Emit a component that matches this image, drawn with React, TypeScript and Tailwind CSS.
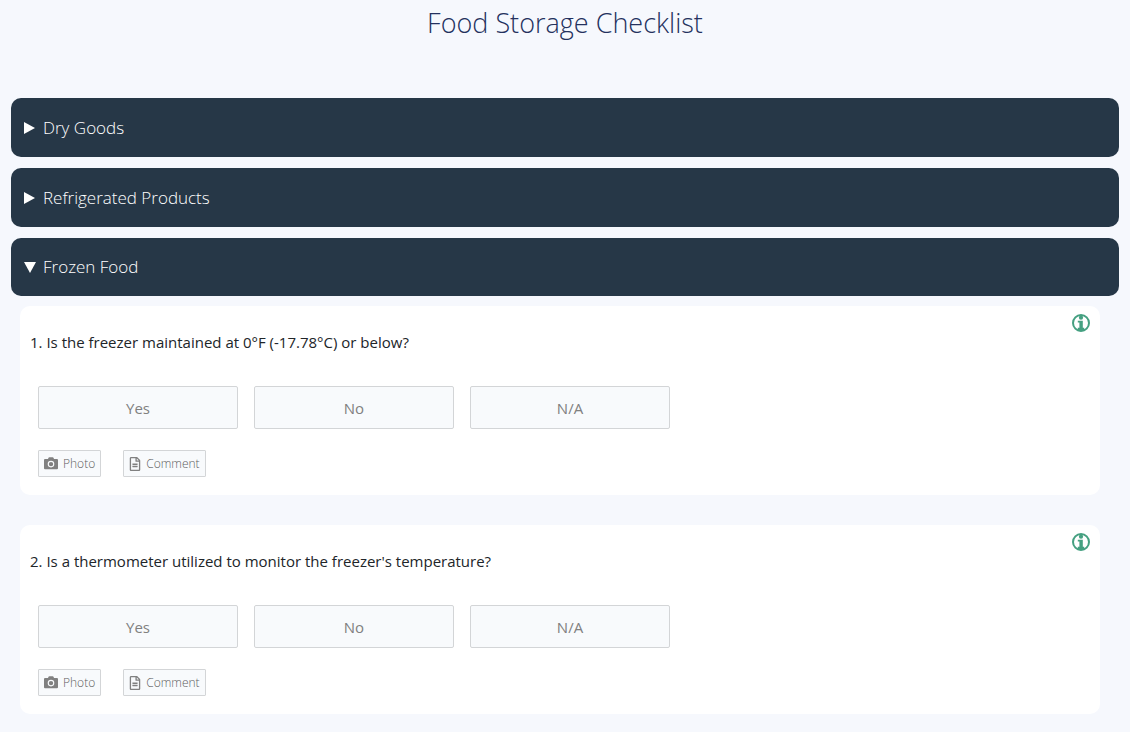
import { useState } from "react";
import type { ReactNode } from "react";
import { FaRegFileAlt } from "react-icons/fa";

const answers = ["Yes", "No", "N/A"];

const questions = [
  "1. Is the freezer maintained at 0°F (-17.78°C) or below?",
  "2. Is a thermometer utilized to monitor the freezer's temperature?",
];

function InfoIcon() {
  return (
    <svg viewBox="0 0 18 18" className="size-[18px]" fill="none" aria-hidden="true">
      <circle cx="9" cy="9" r="8" stroke="#45a081" strokeWidth="2" />
      <circle cx="9" cy="3.700" r="2.100" fill="#45a081" />
      <path d="M5.800 6.800h5v7h1.400V16H5.800v-2.200h1.600V8.600H5.800z" fill="#45a081" />
    </svg>
  );
}

function CameraIcon() {
  return (
    <svg viewBox="0 0 14 14" className="size-[14px] text-[#808080]" fill="none" aria-hidden="true">
      <path
        fill="currentColor"
        fillRule="evenodd"
        d="M1 2h3L4.500 .8Q4.700 .3 5.300 .3h3.400q.6 0 .8.5L10 2h3q1 0 1 1v8.300q0 1-1 1H1q-1 0-1-1V3Q0 2 1 2zM7 3.800a3.300 3.300 0 1 0 0 6.600a3.300 3.300 0 0 0 0-6.600zM7 4.900a2.200 2.200 0 1 1 0 4.400a2.200 2.200 0 0 1 0-4.400z"
      />
    </svg>
  );
}

function Section({ title, open = false, children }: { title: string; open?: boolean; children?: ReactNode }) {
  return (
    <details open={open} className="group">
      <summary className="flex h-[59px] cursor-pointer list-none items-center rounded-[10px] bg-[#263747] pl-[13px] text-[17px] font-light text-white group-open:h-[58px]">
        <svg viewBox="0 0 12 12" className="mr-[7px] size-3 group-open:hidden" fill="currentColor" aria-hidden="true">
          <path d="M0 0l11 6-11 6z" />
        </svg>
        <svg viewBox="0 0 12 12" className="mr-[7px] hidden size-3 group-open:block" fill="currentColor" aria-hidden="true">
          <path d="M0 1h12L6 12z" />
        </svg>
        {title}
      </summary>
      {children}
    </details>
  );
}

function Question({ text }: { text: string }) {
  const [answer, setAnswer] = useState("");
  return (
    <section className="relative rounded-[10px] bg-white px-[10px] pt-6 pb-[18px]">
      <button type="button" aria-label="More information" className="absolute top-2 right-[10px] cursor-pointer">
        <InfoIcon />
      </button>
      <h2 className="text-[15px] leading-6 text-[#212529]">{text}</h2>
      <div className="mt-8 flex flex-wrap gap-4 px-2">
        {answers.map((label) => (
          <button
            key={label}
            type="button"
            aria-pressed={answer === label}
            onClick={() => setAnswer(label)}
            className="h-[43px] w-[200px] cursor-pointer rounded-[2px] border border-[#d3d5d7] bg-[#f8fafc] pt-px text-[15px] text-[#808080] aria-pressed:border-[#45a081]"
          >
            {label}
          </button>
        ))}
      </div>
      <div className="mt-[21px] flex gap-[22px] px-2 text-xs font-light text-[#606060]">
        <button type="button" className="flex h-[27px] cursor-pointer items-center gap-[5px] rounded-[1px] border border-[#d3d5d7] bg-[#f8fafc] px-[5px]">
          <CameraIcon />
          Photo
        </button>
        <button type="button" className="flex h-[27px] cursor-pointer items-center gap-[5px] rounded-[1px] border border-[#d3d5d7] bg-[#f8fafc] px-[5px]">
          <FaRegFileAlt className="h-[14px] w-3 text-[#808080]" />
          Comment
        </button>
      </div>
    </section>
  );
}

export default function App() {
  return (
    <main className="min-h-screen bg-[#f6f8fd] px-[11px] pb-[19px] font-['Open_Sans','Noto_Sans',sans-serif]">
      <h1 className="pt-[5px] text-center text-[27px] leading-9 font-light text-[#24315e]">Food Storage Checklist</h1>
      <div className="mt-[57px] flex flex-col gap-[11px]">
        <Section title="Dry Goods" />
        <Section title="Refrigerated Products" />
        <Section title="Frozen Food" open>
          <div className="mt-[10px] mr-[19px] ml-[9px] flex flex-col gap-[30px]">
            {questions.map((text) => (
              <Question key={text} text={text} />
            ))}
          </div>
        </Section>
      </div>
    </main>
  );
}
